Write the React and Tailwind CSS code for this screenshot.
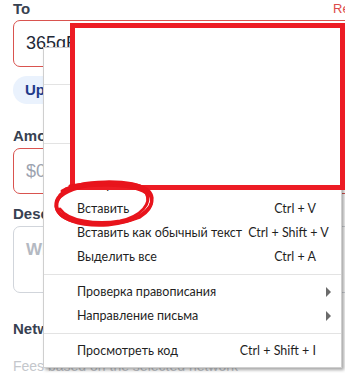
import { useState } from 'react';

const MenuItem = ({ label, shortcut, arrow }) => (
  <div className="flex h-[24px] items-center pl-[33px] pr-[25px]">
    <span className="flex-1 whitespace-nowrap">{label}</span>
    {shortcut && <span className="ml-[6px] whitespace-nowrap">{shortcut}</span>}
    {arrow && (
      <span className="mr-[-15px] ml-auto h-0 w-0 border-y-[5px] border-l-[5px] border-y-transparent border-l-[#6b6b6b]" />
    )}
  </div>
);

const Sep = () => <div className="my-[5px] h-px bg-[#e3e3e3]" />;

const ContextMenu = () => (
  <div
    className="absolute left-[43px] top-[47px] w-[299px] border border-[#cfcfcf] bg-white pb-[4px] pt-[7px] text-[12.5px] text-[#1f1f1f] shadow-[2px_2px_3px_rgba(0,0,0,0.35)]"
    style={{ fontFamily: 'Lato, "Noto Sans", sans-serif' }}
  >
    <MenuItem label="Эмодзи" shortcut="Win + ." />
    <Sep />
    <MenuItem label="Отменить" shortcut="Ctrl + Z" />
    <MenuItem label="Повторить" shortcut="Ctrl + Shift + Z" />
    <Sep />
    <MenuItem label="Вырезать" shortcut="Ctrl + X" />
    <MenuItem label="Копировать" shortcut="Ctrl + C" />
    <MenuItem label="Вставить" shortcut="Ctrl + V" />
    <MenuItem label="Вставить как обычный текст" shortcut="Ctrl + Shift + V" />
    <MenuItem label="Выделить все" shortcut="Ctrl + A" />
    <Sep />
    <MenuItem label="Проверка правописания" arrow />
    <MenuItem label="Направление письма" arrow />
    <Sep />
    <MenuItem label="Просмотреть код" shortcut="Ctrl + Shift + I" />
  </div>
);

const Scribble = () => (
  <svg
    className="pointer-events-none absolute left-0 top-0"
    width="345"
    height="373"
    viewBox="0 0 345 373"
  >
    <g fill="none" stroke="#e8141c" strokeWidth="3" strokeLinecap="round" strokeLinejoin="round">
      <path d="M62 191 C80 180 130 178 148 190 C158 199 150 215 126 221 C98 228 63 224 57 210 C53 200 60 193 72 188" />
      <path d="M70 186 C95 181 140 182 151 197 C155 209 138 222 108 225 C80 227 57 219 56 206 C56 196 68 190 86 186" />
      <path d="M60 195 C70 184 118 180 140 186 C156 193 155 208 140 217 C118 226 76 227 61 214 C54 207 56 198 66 192" />
      <path d="M66 189 C88 184 132 183 146 193 C152 203 142 216 120 221 C96 225 68 221 60 209" />
    </g>
  </svg>
);

export default function App() {
  const [to] = useState('365qRv8mXpT2');

  return (
    <div
      className="relative h-[373px] w-[345px] overflow-hidden bg-white"
      style={{ fontFamily: '"Liberation Sans", Arial, sans-serif' }}
    >
      <div className="flex w-[380px] flex-col px-[13px]">
        <div className="flex h-[18px] items-center justify-between">
          <span className="text-[15px] font-bold text-[#374151]">To</span>
          <span className="text-[13px] text-[#dc4a4a]">Reset</span>
        </div>
        <div className="mt-[2px] flex h-[47px] items-center rounded-[7px] border border-[#d9534f] px-[12px] text-[18px] text-[#1f2937]">
          {to}
        </div>
        <div className="mt-[9px] flex h-[28px] w-fit items-center rounded-full bg-[#eaf2fd] px-[12px] text-[15px] font-semibold text-[#1e3a8a]">
          Update address book
        </div>
        <div className="mt-[21px] h-[18px] text-[15px] font-bold text-[#374151]">Amount</div>
        <div className="mt-[5px] flex h-[46px] items-center rounded-[7px] border border-[#d9534f] px-[12px] text-[18px] text-[#9ca3af]">
          $0.00
        </div>
        <div className="mt-[9px] h-[18px] text-[15px] font-bold text-[#374151]">Description</div>
        <div className="mt-[5px] h-[67px] rounded-[7px] border border-[#d1d5db] px-[12px] pt-[10px] text-[17px] font-bold text-[#b4b9c2]">
          What is this for?
        </div>
        <div className="mt-[25px] h-[18px] text-[15px] font-bold text-[#374151]">Network</div>
        <div className="mt-[20px] text-[14px] text-[#c4c7cc]">Fees based on the selected network</div>
      </div>

      <ContextMenu />

      <div className="absolute left-[70px] top-[23px] h-[167px] w-[275px] border-[5px] border-[#ed1c24] bg-white" />
      <Scribble />
    </div>
  );
}
